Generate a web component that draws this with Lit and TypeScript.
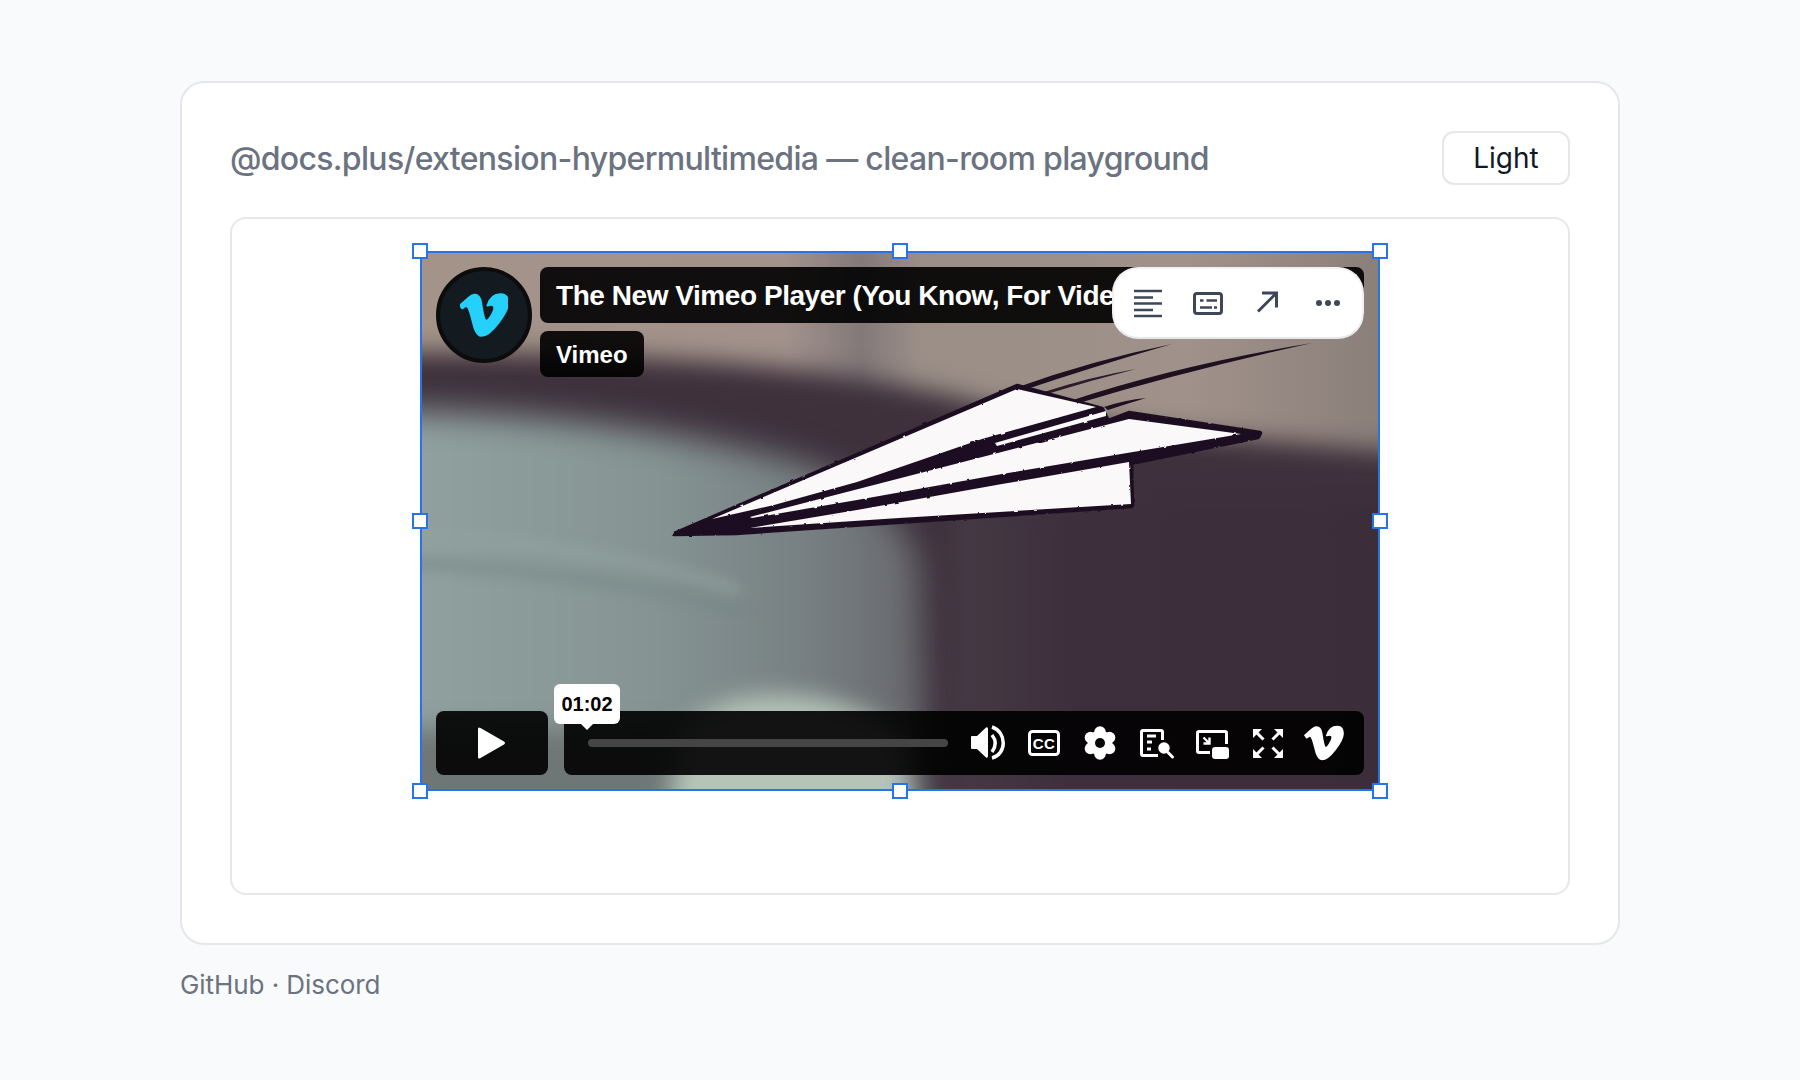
import { LitElement, html, css, svg } from "lit";
import { customElement } from "lit/decorators.js";

const VIMEO_D = "M23.9765 6.4168c-.105 2.338-1.739 5.5429-4.894 9.6088-3.2679 4.247-6.0258 6.3699-8.2898 6.3699-1.409 0-2.578-1.294-3.553-3.881l-1.9179-7.1138c-.719-2.584-1.488-3.878-2.312-3.878-.179 0-.806.378-1.8809 1.132L0 7.197a315.065 315.065 0 003.501-3.128C5.08 2.701 6.266 1.984 7.055 1.91c1.867-.18 3.016 1.1 3.447 3.838.465 2.953.789 4.789.971 5.507.539 2.45 1.131 3.674 1.776 3.674.502 0 1.256-.796 2.265-2.385 1.004-1.589 1.54-2.797 1.612-3.628.144-1.371-.395-2.061-1.614-2.061-.574 0-1.167.121-1.777.391 1.186-3.868 3.434-5.757 6.762-5.637 2.473.06 3.628 1.664 3.493 4.797l-.013.01z";

const scene = svg`
  <defs>
    <filter id="blurT" x="-10%" y="-10%" width="120%" height="120%" color-interpolation-filters="sRGB"><feGaussianBlur stdDeviation="17"/></filter>
    <filter id="blurA" x="-10%" y="-10%" width="120%" height="120%" color-interpolation-filters="sRGB"><feGaussianBlur stdDeviation="12"/></filter>
    <filter id="blurB" x="-10%" y="-10%" width="120%" height="120%" color-interpolation-filters="sRGB"><feGaussianBlur stdDeviation="7"/></filter>
    <filter id="rough" x="-5%" y="-5%" width="110%" height="110%">
      <feTurbulence type="fractalNoise" baseFrequency="0.16" numOctaves="2" seed="4" result="n"/>
      <feDisplacementMap in="SourceGraphic" in2="n" scale="2.2"/>
    </filter>
    <linearGradient id="teal" x1="0" x2="1" y1="0" y2="0">
      <stop offset="0" stop-color="#92a3a1"/>
      <stop offset="0.5" stop-color="#869594"/>
      <stop offset="0.78" stop-color="#778082"/>
      <stop offset="1" stop-color="#66656a"/>
    </linearGradient>
    <linearGradient id="lowDark" x1="0" x2="1" y1="0" y2="0">
      <stop offset="0" stop-color="#463a44"/>
      <stop offset="0.25" stop-color="#3d303c"/>
      <stop offset="1" stop-color="#3b2e3a"/>
    </linearGradient>
    <linearGradient id="topTaupe" x1="0" x2="1" y1="0" y2="0">
      <stop offset="0" stop-color="#a39389"/>
      <stop offset="0.38" stop-color="#a2928b"/>
      <stop offset="0.46" stop-color="#83797a"/>
      <stop offset="0.52" stop-color="#9a8e87"/>
      <stop offset="0.8" stop-color="#a0928a"/>
      <stop offset="1" stop-color="#8b7f7a"/>
    </linearGradient>
  </defs>
  <rect x="0" y="0" width="960" height="540" fill="url(#topTaupe)"/>
  <g filter="url(#blurA)">
    <path d="M-40 102 C 180 100 400 110 560 152 C 700 182 850 188 1000 204 L1000 600 L 460 600 L 460 300 L -40 300 Z" fill="#3e313c"/>
  </g>
  <g filter="url(#blurT)">
    <path d="M-60 158 C 100 160 250 176 390 214 C 440 232 480 262 500 310 L 512 620 L -60 620 Z" fill="url(#teal)"/>
  </g>
  <g filter="url(#blurA)">
    <rect x="-40" y="478" width="300" height="120" fill="#6f7776"/>
    <path d="M262 480 Q300 442 362 444 Q440 447 482 486 L500 600 L240 600 Z" fill="#b5c3b8"/>
    <rect x="530" y="250" width="470" height="370" fill="url(#lowDark)"/>
  </g>
  <g filter="url(#blurB)">
    <path d="M-20 282 C 110 288 240 312 320 340" fill="none" stroke="#93a39f" stroke-width="7"/>
    <path d="M-20 312 C 100 316 240 336 325 360" fill="none" stroke="#778786" stroke-width="7"/>
  </g>
  <path d="M595 137 Q670 110 752 93 Q672 116 601 140Z" fill="#1f1020"/>
  <path d="M624 141 Q670 126 716 118 Q672 129 627 143Z" fill="#2b1c2c"/>
  <path d="M653 149 Q760 114 892 92 Q766 120 659 152Z" fill="#1f1020"/>
  <path d="M684 156 Q705 149 726 147 Q706 153 688 159Z" fill="#1f1020"/>
  <g filter="url(#rough)">
    <path d="M254 283 L597 135 L682 158 L688 170 L709 162 L840 182 L838 186 L711 212 L712 255 L316 282 Z" fill="#1f1020" stroke="#1f1020" stroke-width="4.500" stroke-linejoin="round"/>
    <path d="M292 268 L597 138 L676 156 L562 188 L437 231 L354 254 Z" fill="#fbf8fa"/>
    <path d="M686 160 L575 192 L577 195 L686 165 Z" fill="#fbf8fa"/>
    <path d="M330 266 L709 168 L821 183 L707 202 L582 223 L437 249 L332 267 Z" fill="#fbf8fa"/>
    <path d="M330 277 L437 259 L582 233 L709 211 L711 253 L479 267 Z" fill="#fbf8fa"/>
  </g>
`;

@customElement("app-root")
export class AppRoot extends LitElement {
  static styles = css`
    :host {
      display: block;
      min-height: 1080px;
      box-sizing: border-box;
      background: #f9fafb;
      font-family: Inter, "Liberation Sans", sans-serif;
      padding: 81px 180px 0;
    }
    .card {
      background: #fff;
      border: 2px solid #e5e7eb;
      border-radius: 24px;
      padding: 48px;
      box-sizing: border-box;
      height: 864px;
    }
    .header {
      display: flex;
      align-items: center;
      justify-content: space-between;
      margin-bottom: 32px;
    }
    .title { font-size: 32px; font-weight: 500; color: #6b7280; letter-spacing: -0.68px; }
    .light {
      box-sizing: border-box;
      width: 128px;
      height: 54px;
      border: 2px solid #e5e7eb;
      border-radius: 12px;
      background: #fff;
      font: 400 28px Inter, "Liberation Sans", sans-serif;
      color: #111827;
      padding: 0;
    }
    .editor {
      box-sizing: border-box;
      height: 678px;
      border: 2px solid #e5e7eb;
      border-radius: 16px;
      padding: 32px;
      display: flex;
      justify-content: center;
      align-items: flex-start;
    }
    .frame { position: relative; width: 960px; height: 540px; flex: none; }
    .scene { position: absolute; inset: 0; width: 960px; height: 540px; display: block; }
    .outline { position: absolute; inset: 0; border: 2px solid #2675e8; box-sizing: border-box; pointer-events: none; }
    .handle {
      position: absolute;
      width: 16px;
      height: 16px;
      box-sizing: border-box;
      background: #fff;
      border: 2px solid #2675e8;
    }
    .tl { left: -8px; top: -8px; }
    .tc { left: 472px; top: -8px; }
    .tr { right: -8px; top: -8px; }
    .ml { left: -8px; top: 262px; }
    .mr { right: -8px; top: 262px; }
    .bl { left: -8px; bottom: -8px; }
    .bc { left: 472px; bottom: -8px; }
    .br { right: -8px; bottom: -8px; }

    .player {
      position: absolute;
      inset: 0;
      box-sizing: border-box;
      padding: 16px;
      display: flex;
      flex-direction: column;
      justify-content: space-between;
      font-family: "Liberation Sans", Arial, sans-serif;
      color: #fff;
    }
    .top { display: flex; gap: 8px; align-items: flex-start; }
    .avatar {
      flex: none;
      width: 96px;
      height: 96px;
      box-sizing: border-box;
      border-radius: 50%;
      background: #131b21;
      border: 4px solid #0c0c0d;
      display: flex;
      align-items: center;
      justify-content: center;
    }
    .avatar svg { width: 48px; height: 48px; display: block; }
    .meta { flex: 1; min-width: 0; display: flex; flex-direction: column; align-items: flex-start; gap: 8px; }
    .bar {
      box-sizing: border-box;
      background: rgba(0, 0, 0, 0.9);
      border-radius: 8px;
      padding: 2px 16px 0;
      display: flex;
      align-items: center;
      font-weight: 700;
      white-space: nowrap;
      overflow: hidden;
    }
    .video-title { width: 100%; height: 56px; font-size: 28px; letter-spacing: -0.45px; }
    .byline { height: 46px; font-size: 24px; }

    .toolbar {
      position: absolute;
      top: 16px;
      right: 16px;
      box-sizing: border-box;
      width: 252px;
      height: 72px;
      padding: 0 14px;
      display: flex;
      align-items: center;
      gap: 20px;
      background: #fff;
      border: 2px solid #f1f1f3;
      border-bottom-color: #e5e7eb;
      border-radius: 26px;
    }
    .toolbar svg { width: 40px; height: 40px; display: block; flex: none; color: #3d4757; }

    .bottom { display: flex; gap: 16px; height: 64px; }
    .play {
      flex: none;
      width: 112px;
      background: rgba(0, 0, 0, 0.9);
      border-radius: 8px;
      display: flex;
      align-items: center;
      justify-content: center;
    }
    .play svg { width: 32px; height: 36px; display: block; }
    .controls {
      flex: 1;
      min-width: 0;
      position: relative;
      background: rgba(0, 0, 0, 0.9);
      border-radius: 8px;
      padding: 0 20px 0 24px;
      display: flex;
      align-items: center;
      gap: 20px;
    }
    .track { flex: 1; height: 8px; border-radius: 4px; background: #454545; }
    .icons { display: flex; gap: 16px; }
    .icons svg { width: 40px; height: 40px; display: block; color: #fff; }
    .tip {
      position: absolute;
      left: -10px;
      top: -27px;
      width: 66px;
      height: 40px;
      background: #fff;
      border-radius: 6px;
      color: #000;
      font-size: 20px;
      font-weight: 700;
      display: flex;
      align-items: center;
      justify-content: center;
    }
    .tip::after {
      content: "";
      position: absolute;
      left: 27px;
      bottom: -6px;
      width: 0;
      height: 0;
      border-left: 6px solid transparent;
      border-right: 6px solid transparent;
      border-top: 6px solid #fff;
    }
    .foot { margin-top: 20px; font-size: 26px; line-height: 39px; color: #6b7280; letter-spacing: -0.07px; }
  `;

  render() {
    return html`
      <div class="card">
        <div class="header">
          <div class="title">@docs.plus/extension-hypermultimedia — clean-room playground</div>
          <button class="light">Light</button>
        </div>
        <div class="editor">
          <div class="frame">
            <svg class="scene" viewBox="0 0 960 540">${scene}</svg>
            <div class="player">
              <div class="top">
                <div class="avatar">
                  <svg viewBox="0 0 24 24"><path d="${VIMEO_D}" fill="#25d1fb" stroke="#25d1fb" stroke-width="1" stroke-linejoin="round"/></svg>
                </div>
                <div class="meta">
                  <div class="bar video-title">The New Vimeo Player (You Know, For Videos)</div>
                  <div class="bar byline">Vimeo</div>
                </div>
              </div>
              <div class="bottom">
                <div class="play">
                  <svg viewBox="0 0 32 36"><path d="M2 4Q2 1.500 4.500 3L28 16.500Q30 18 28 19.500L4.500 33Q2 34.500 2 32Z" fill="#fff"/></svg>
                </div>
                <div class="controls">
                  <div class="tip">01:02</div>
                  <div class="track"></div>
                  <div class="icons">
                    <svg viewBox="0 0 40 40">
                      <path d="M4 13h5L18 4.500Q20 3.500 20 6V33Q20 35.500 18 34.500L9 26H4Q3 26 3 25V14Q3 13 4 13Z" fill="#fff"/>
                      <path d="M24 12Q30.500 20 24 29M24 4C39 9 39 31 24 35" fill="none" stroke="#fff" stroke-width="3.500"/>
                    </svg>
                    <svg viewBox="0 0 40 40">
                      <rect x="5.500" y="8.500" width="29" height="23" rx="3" fill="none" stroke="#fff" stroke-width="3"/>
                      <text x="20" y="25.500" text-anchor="middle" font-family="Liberation Sans, Arial, sans-serif" font-size="15" font-weight="700" letter-spacing=".4" fill="#fff">CC</text>
                    </svg>
                    <svg viewBox="0 0 40 40">
                      <g fill="#fff">
                        <circle cx="20" cy="20" r="12.500"/>
                        <circle cx="20" cy="9" r="5.800"/><circle cx="20" cy="31" r="5.800"/>
                        <circle cx="10.500" cy="14.500" r="5.800"/><circle cx="29.500" cy="14.500" r="5.800"/>
                        <circle cx="10.500" cy="25.500" r="5.800"/><circle cx="29.500" cy="25.500" r="5.800"/>
                      </g>
                      <circle cx="20" cy="20" r="5" fill="#070707"/>
                    </svg>
                    <svg viewBox="0 0 40 40">
                      <path d="M22 32.500H7Q5.500 32.500 5.500 31V9Q5.500 7.500 7 7.500H25Q26.500 7.500 26.500 9V17" fill="none" stroke="#fff" stroke-width="3"/>
                      <path d="M11 13H20M11 19H16M11 26H15" fill="none" stroke="#fff" stroke-width="3"/>
                      <circle cx="28" cy="25" r="6.500" fill="#fff" stroke="#070707" stroke-width="1.500"/>
                      <path d="M32 29.500L36.500 34" stroke="#fff" stroke-width="3" stroke-linecap="round"/>
                    </svg>
                    <svg viewBox="0 0 40 40">
                      <path d="M18 29.500H7Q5.500 29.500 5.500 28V10Q5.500 8.500 7 8.500H33Q34.500 8.500 34.500 10V21" fill="none" stroke="#fff" stroke-width="3"/>
                      <rect x="20" y="24" width="17" height="12" rx="3" fill="#fff"/>
                      <path d="M11.500 14.500L17 20M17.500 14.500V20.500H11.500" fill="none" stroke="#fff" stroke-width="2.400"/>
                    </svg>
                    <svg viewBox="0 0 40 40">
                      <g fill="#fff">
                        <path d="M5 6H14L5 15Z"/><path d="M35 6H26L35 15Z"/>
                        <path d="M5 35H14L5 26Z"/><path d="M35 35H26L35 26Z"/>
                      </g>
                      <path d="M8 9L15.500 16.500M32 9L24.500 16.500M8 32L15.500 24.500M32 32L24.500 24.500" stroke="#fff" stroke-width="3"/>
                    </svg>
                    <svg viewBox="-0.6 -0.600 25.200 25.200">
                      <path d="${VIMEO_D}" fill="#fff" stroke="#fff" stroke-width="1" stroke-linejoin="round"/>
                    </svg>
                  </div>
                </div>
              </div>
            </div>
            <div class="toolbar">
              <svg viewBox="0 0 40 40">
                <path d="M6 8H34M6 14.500H25M6 20.500H34M6 27H25M6 33H34" fill="none" stroke="currentColor" stroke-width="2.400"/>
              </svg>
              <svg viewBox="0 0 40 40">
                <rect x="6.500" y="10.500" width="27" height="20" rx="2.500" fill="none" stroke="currentColor" stroke-width="3"/>
                <path d="M12 17.500H15.500M18.500 17.500H29M12 24.500H24M26 24.500H29" fill="none" stroke="currentColor" stroke-width="2.400"/>
              </svg>
              <svg viewBox="0 0 40 40">
                <path d="M10 28.500L28 10.500M14 10H28.500V24.500" fill="none" stroke="currentColor" stroke-width="3"/>
              </svg>
              <svg viewBox="0 0 40 40">
                <circle cx="11" cy="20" r="3" fill="currentColor"/><circle cx="20" cy="20" r="3" fill="currentColor"/><circle cx="29" cy="20" r="3" fill="currentColor"/>
              </svg>
            </div>
            <div class="outline"></div>
            <span class="handle tl"></span><span class="handle tc"></span><span class="handle tr"></span>
            <span class="handle ml"></span><span class="handle mr"></span>
            <span class="handle bl"></span><span class="handle bc"></span><span class="handle br"></span>
          </div>
        </div>
      </div>
      <div class="foot">GitHub · Discord</div>
    `;
  }
}
